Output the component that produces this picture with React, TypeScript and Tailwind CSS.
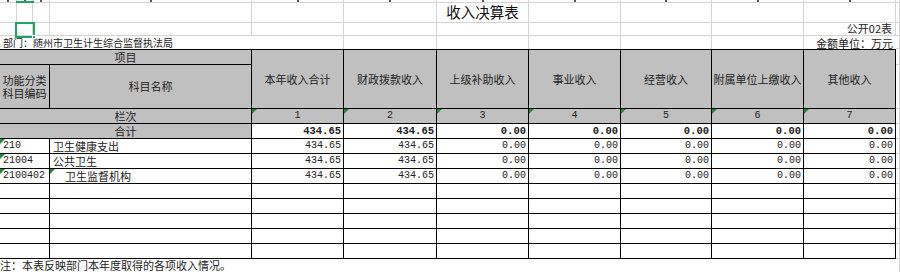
import React from 'react';

const cjk = "font-['SimSun','Noto_Sans_CJK_SC',sans-serif]";
const mono = "font-['Liberation_Mono',monospace]";

const light = 'border-r border-b border-[#d4d4d4]';
const dark = 'border-r border-b border-black';
const gray = 'bg-[#c0c0c0]';

const heads = ['本年收入合计', '财政拨款收入', '上级补助收入', '事业收入', '经营收入', '附属单位上缴收入', '其他收入'];
const cols = [0, 1, 2, 3, 4, 5, 6, 7, 8, 9, 10, 11];

const rows = [
  { code: '210', name: '卫生健康支出', indent: false },
  { code: '21004', name: '公共卫生', indent: false },
  { code: '2100402', name: '卫生监督机构', indent: true },
];
const values = ['434.65', '434.65', '0.00', '0.00', '0.00', '0.00', '0.00'];

function Flag() {
  return <span className="absolute top-0 left-0 w-0 h-0 border-t-[5px] border-r-[5px] border-t-[#1e8a3c] border-r-transparent" />;
}

export default function App() {
  return (
    <div className="relative w-[900px] h-[272px] overflow-hidden bg-white text-[#222]">
      <div className="grid grid-cols-[17px_16px_17px_202px_92px_93px_92px_92px_91px_92px_92px_4px] grid-rows-[3px_20px_13px_13px_16px_44px_15px_15px_15px_15px_15px_15px_15px_15px_15px_15px_13px]">
        {/* column header strip, cut off: only the feet of the letters show */}
        {cols.map((i) => (
          <div key={'h' + i} className={`${light} flex items-start justify-center`}>
            {i < 11 && <span className="w-[2px] h-[2px] bg-[#555]" />}
          </div>
        ))}

        {/* title row */}
        {cols.map((i) => (
          <div key={'t' + i} className={`${light} flex items-center justify-center overflow-visible`}>
            {i === 6 && <span className={`${cjk} text-[14.5px] leading-none whitespace-nowrap text-[#111]`}>收入决算表</span>}
          </div>
        ))}

        {/* 公开02表 row */}
        {cols.map((i) => (
          <div key={'g' + i} className={`${light} flex items-end justify-end pr-[3px] pb-[1px]`}>
            {i === 10 && <span className={`${cjk} text-[11px] leading-[11px] whitespace-nowrap`}>公开02表</span>}
          </div>
        ))}

        {/* 部门 row */}
        <div className="col-span-4 flex items-end pl-[3px] pb-[1px]">
          <span className={`${cjk} text-[10px] leading-[10px] whitespace-nowrap`}>部门：随州市卫生计生综合监督执法局</span>
        </div>
        {[4, 5, 6, 7, 8, 9].map((i) => (
          <div key={'d' + i} className="border-r border-[#d4d4d4]" />
        ))}
        <div className="flex items-end justify-end pr-[3px]">
          <span className={`${cjk} text-[11px] leading-[11px] whitespace-nowrap`}>金额单位：万元</span>
        </div>
        <div className={light} />

        {/* header rows */}
        <div className={`col-span-4 ${dark} border-t ${gray} flex items-center justify-center`}>
          <span className={`${cjk} text-[11px] leading-none`}>项目</span>
        </div>
        {heads.map((h) => (
          <div key={h} className={`row-span-2 ${dark} border-t ${gray} flex items-center justify-center`}>
            <span className={`${cjk} text-[11px] leading-none whitespace-nowrap`}>{h}</span>
          </div>
        ))}
        <div className={light} />
        <div className={`col-span-3 ${dark} ${gray} flex items-center justify-center`}>
          <span className={`${cjk} text-[11px] leading-[13px] text-center`}>
            功能分类
            <br />
            科目编码
          </span>
        </div>
        <div className={`${dark} ${gray} flex items-center justify-center`}>
          <span className={`${cjk} text-[11px] leading-none`}>科目名称</span>
        </div>
        <div className={light} />

        {/* 栏次 */}
        <div className={`col-span-4 ${dark} ${gray} flex items-center justify-center`}>
          <span className={`${cjk} text-[11px] leading-none`}>栏次</span>
        </div>
        {heads.map((_, i) => (
          <div key={'n' + i} className={`relative ${dark} ${gray} flex items-center justify-center`}>
            <Flag />
            <span className={`${mono} text-[10px] leading-none`}>{i + 1}</span>
          </div>
        ))}
        <div className={light} />

        {/* 合计 */}
        <div className={`col-span-4 ${dark} ${gray} flex items-center justify-center`}>
          <span className={`${cjk} text-[11px] leading-none`}>合计</span>
        </div>
        {values.map((v, i) => (
          <div key={'s' + i} className={`${dark} flex items-center justify-end pr-[2px]`}>
            <span className={`${mono} text-[10.5px] leading-none font-bold`}>{v}</span>
          </div>
        ))}
        <div className={light} />

        {/* data */}
        {rows.map((r) => (
          <React.Fragment key={r.code}>
            <div className={`relative col-span-3 ${dark} flex items-center pl-[3px]`}>
              <Flag />
              <span className={`${mono} text-[10px] leading-none`}>{r.code}</span>
            </div>
            <div className={`relative ${dark} flex items-center ${r.indent ? 'pl-[15px]' : 'pl-[3px]'}`}>
              {r.indent && <Flag />}
              <span className={`${cjk} text-[11px] leading-none`}>{r.name}</span>
            </div>
            {values.map((v, i) => (
              <div key={i} className={`${dark} flex items-center justify-end pr-[2px]`}>
                <span className={`${mono} text-[10px] leading-none`}>{v}</span>
              </div>
            ))}
            <div className={light} />
          </React.Fragment>
        ))}

        {/* empty rows */}
        {[0, 1, 2, 3, 4].map((k) => (
          <React.Fragment key={'e' + k}>
            <div className={`col-span-3 ${dark}`} />
            <div className={dark} />
            {values.map((_, i) => (
              <div key={i} className={dark} />
            ))}
            <div className={light} />
          </React.Fragment>
        ))}

        {/* note */}
        <div className="col-span-11 flex items-center">
          <span className={`${cjk} text-[11px] leading-none whitespace-nowrap`}>注：本表反映部门本年度取得的各项收入情况。</span>
        </div>
        <div className="border-r border-[#d4d4d4]" />
      </div>

      {/* active cell selection */}
      <div className="absolute left-[16px] top-[1px] w-[18px] h-[2px] bg-[#21a366]" />
      <div className="absolute left-[15px] top-[22px] w-[20px] h-[16px] border-2 border-[#21a366]" />
      <div className="absolute left-[32px] top-[35px] w-[4px] h-[4px] bg-[#21a366] border border-white" />
    </div>
  );
}
